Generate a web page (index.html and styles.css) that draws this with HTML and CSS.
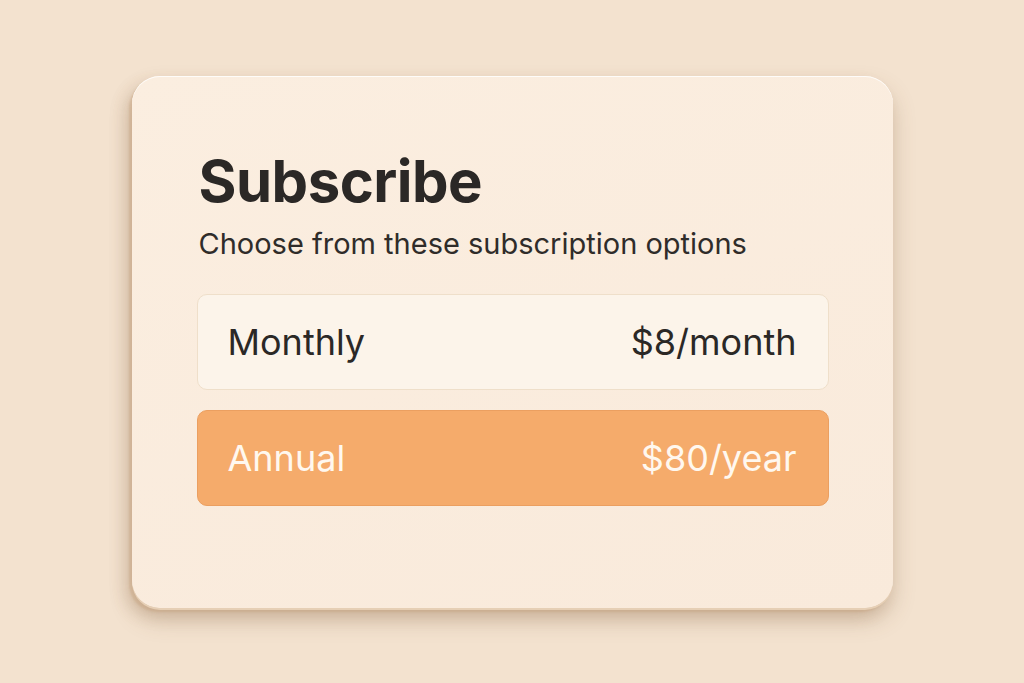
FILE: index.html
```html
<!DOCTYPE html>
<html lang="en">
<head>
    <meta charset="UTF-8">
    <meta name="viewport" content="width=device-width, initial-scale=1.0">
    <title>Subscribe</title>
    <link rel="stylesheet" href="styles.css">
</head>
<body>
    <div class="card">
        <h1 class="card-title">Subscribe</h1>
        <p class="card-subtitle">Choose from these subscription options</p>

        <div class="plans">
            <div class="plan">
                <span class="plan-name">Monthly</span>
                <span class="plan-price">$8/month</span>
            </div>
            <div class="plan selected">
                <span class="plan-name">Annual</span>
                <span class="plan-price">$80/year</span>
            </div>
        </div>
    </div>
</body>
</html>
```

FILE: styles.css
```css
* {
    margin: 0;
    padding: 0;
    box-sizing: border-box;
}

body {
    font-family: 'Inter', 'Liberation Sans', sans-serif;
    background: #f3e2cf;
    color: #2b2826;
    display: flex;
    justify-content: center;
    align-items: center;
    height: 100vh;
    overflow: hidden;
}

.card {
    width: 761px;
    height: 532px;
    padding: 70px 64px 0 65px;
    background: linear-gradient(160deg, #fbeee0 0%, #f9eadb 100%);
    border-radius: 28px;
    box-shadow:
        inset 0 1px 0 rgba(255, 255, 255, 0.8),
        0 2px 0 #e6cfb5,
        -3px 4px 2px rgba(200, 165, 128, 0.45),
        0 12px 22px rgba(120, 84, 50, 0.26),
        -8px 8px 16px rgba(140, 100, 60, 0.16);
}

.card-title {
    font-size: 58px;
    font-weight: 700;
    line-height: 70px;
    letter-spacing: -0.5px;
    padding-left: 2px;
}

.card-subtitle {
    margin-top: 10px;
    font-size: 29px;
    line-height: 36px;
    color: #2f2c2a;
    padding-left: 2px;
}

.plans {
    margin-top: 32px;
    display: flex;
    flex-direction: column;
    gap: 20px;
}

.plan {
    height: 96px;
    padding: 0 31px 0 30px;
    display: flex;
    align-items: center;
    justify-content: space-between;
    font-size: 36px;
    background: #fcf4ea;
    border: 1px solid #efdfca;
    border-radius: 10px;
}

.plan.selected {
    background: #f5ab6b;
    border-color: #eb9f60;
    color: #fff8ef;
}
```
